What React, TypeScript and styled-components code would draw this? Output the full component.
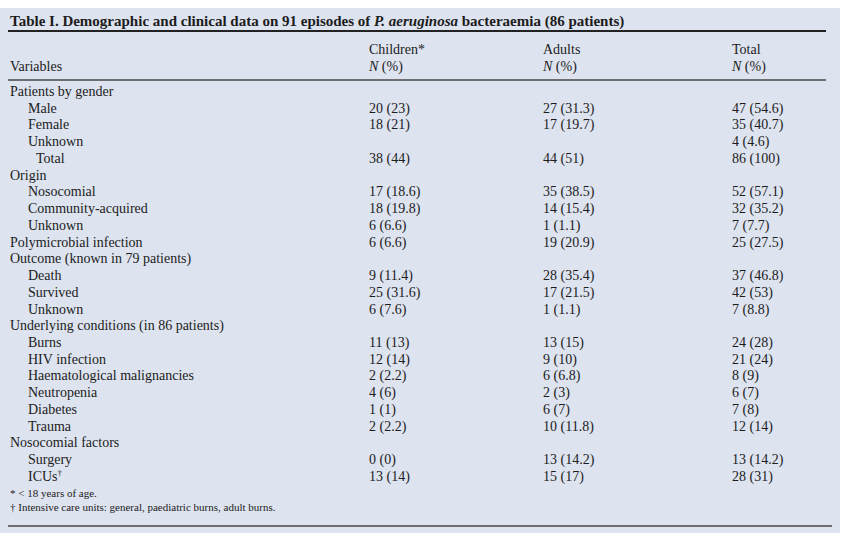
import { createGlobalStyle, styled } from 'styled-components';

type Row = {
  label: string;
  level: 0 | 1 | 2;
  sup?: string;
  values?: [string, string, string];
};

const rows: Row[] = [
  { label: 'Patients by gender', level: 0 },
  { label: 'Male', level: 1, values: ['20 (23)', '27 (31.3)', '47 (54.6)'] },
  { label: 'Female', level: 1, values: ['18 (21)', '17 (19.7)', '35 (40.7)'] },
  { label: 'Unknown', level: 1, values: ['', '', '4 (4.6)'] },
  { label: 'Total', level: 2, values: ['38 (44)', '44 (51)', '86 (100)'] },
  { label: 'Origin', level: 0 },
  { label: 'Nosocomial', level: 1, values: ['17 (18.6)', '35 (38.5)', '52 (57.1)'] },
  { label: 'Community-acquired', level: 1, values: ['18 (19.8)', '14 (15.4)', '32 (35.2)'] },
  { label: 'Unknown', level: 1, values: ['6 (6.6)', '1 (1.1)', '7 (7.7)'] },
  { label: 'Polymicrobial infection', level: 0, values: ['6 (6.6)', '19 (20.9)', '25 (27.5)'] },
  { label: 'Outcome (known in 79 patients)', level: 0 },
  { label: 'Death', level: 1, values: ['9 (11.4)', '28 (35.4)', '37 (46.8)'] },
  { label: 'Survived', level: 1, values: ['25 (31.6)', '17 (21.5)', '42 (53)'] },
  { label: 'Unknown', level: 1, values: ['6 (7.6)', '1 (1.1)', '7 (8.8)'] },
  { label: 'Underlying conditions (in 86 patients)', level: 0 },
  { label: 'Burns', level: 1, values: ['11 (13)', '13 (15)', '24 (28)'] },
  { label: 'HIV infection', level: 1, values: ['12 (14)', '9 (10)', '21 (24)'] },
  { label: 'Haematological malignancies', level: 1, values: ['2 (2.2)', '6 (6.8)', '8 (9)'] },
  { label: 'Neutropenia', level: 1, values: ['4 (6)', '2 (3)', '6 (7)'] },
  { label: 'Diabetes', level: 1, values: ['1 (1)', '6 (7)', '7 (8)'] },
  { label: 'Trauma', level: 1, values: ['2 (2.2)', '10 (11.8)', '12 (14)'] },
  { label: 'Nosocomial factors', level: 0 },
  { label: 'Surgery', level: 1, values: ['0 (0)', '13 (14.2)', '13 (14.2)'] },
  { label: 'ICUs', level: 1, sup: '†', values: ['13 (14)', '15 (17)', '28 (31)'] },
];

const GlobalStyle = createGlobalStyle`
  html, body {
    margin: 0;
    padding: 0;
    background: #ffffff;
  }
`;

const App = () => {
  return (
    <>
      <GlobalStyle />
      <Panel>
        <Title>
          Table I. Demographic and clinical data on 91 episodes of <i>P. aeruginosa</i> bacteraemia (86 patients)
        </Title>
        <Header>
          <Cell>Variables</Cell>
          <Cell>
            Children*
            <br />
            <i>N</i> (%)
          </Cell>
          <Cell>
            Adults
            <br />
            <i>N</i> (%)
          </Cell>
          <Cell>
            Total
            <br />
            <i>N</i> (%)
          </Cell>
        </Header>
        <Body>
          {rows.map((row, i) => (
            <BodyRow key={i}>
              <Label $level={row.level}>
                {row.label}
                {row.sup && <sup>{row.sup}</sup>}
              </Label>
              <Cell>{row.values?.[0]}</Cell>
              <Cell>{row.values?.[1]}</Cell>
              <Cell>{row.values?.[2]}</Cell>
            </BodyRow>
          ))}
        </Body>
        <Notes>
          <div>* &lt; 18 years of age.</div>
          <div>† Intensive care units: general, paediatric burns, adult burns.</div>
        </Notes>
      </Panel>
    </>
  );
};

const Panel = styled.div`
  width: 840px;
  height: 525px;
  margin-top: 8px;
  box-sizing: border-box;
  padding: 0 8px;
  background: #dde3ef;
  color: #1c1c1c;
  font-family: 'Liberation Serif', 'DejaVu Serif', serif;
  font-size: 14px;
`;

const Title = styled.div`
  width: 818px;
  height: 24px;
  padding: 5px 0 0 2px;
  box-sizing: border-box;
  font-weight: bold;
  font-size: 15px;
  border-bottom: 2px solid #222222;
`;

const grid = `
  display: grid;
  grid-template-columns: 359px 174px 189px 1fr;
  padding-left: 2px;
`;

const Header = styled.div`
  ${grid}
  width: 818px;
  box-sizing: border-box;
  padding-top: 9px;
  padding-bottom: 4px;
  line-height: 17px;
  align-items: end;
  border-bottom: 2px solid #6e6e72;
`;

const Cell = styled.div`
  white-space: nowrap;
`;

const Body = styled.div`
  padding-top: 3px;
`;

const BodyRow = styled.div`
  ${grid}
  height: 16.74px;
  line-height: 16.74px;
`;

const Label = styled.div<{ $level: 0 | 1 | 2 }>`
  white-space: nowrap;
  padding-left: ${(p) => (p.$level === 0 ? 0 : p.$level === 1 ? 18 : 26)}px;

  sup {
    font-size: 9px;
    line-height: 0;
    vertical-align: 5px;
  }
`;

const Notes = styled.div`
  width: 824px;
  box-sizing: border-box;
  padding: 0 0 11px 2px;
  font-size: 11px;
  line-height: 14px;
  border-bottom: 2px solid #6e6e72;
`;

export default App;
